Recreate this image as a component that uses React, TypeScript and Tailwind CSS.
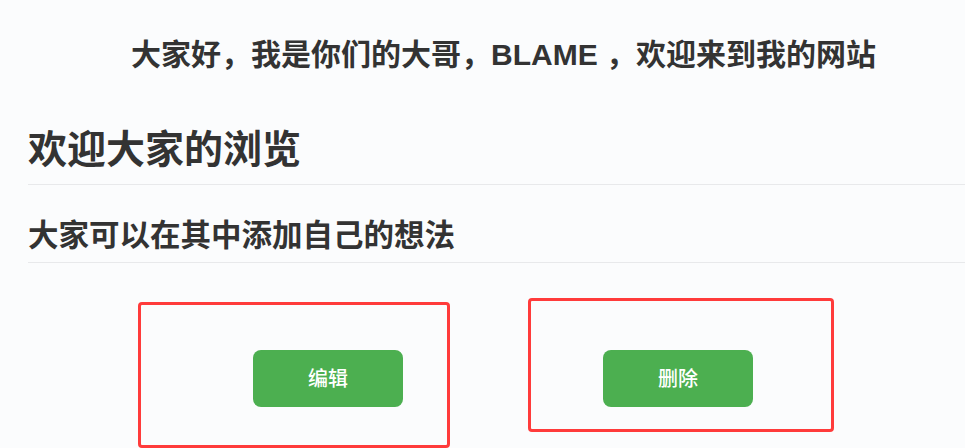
import React from "react";

export default function App() {
  const cjk = { fontFamily: '"Liberation Sans", "Noto Sans CJK SC", sans-serif' };
  return (
    <div className="w-[965px] h-[448px] overflow-hidden bg-[#fbfcfd] text-[#333333]" style={cjk}>
      <div className="pt-[40px]">
        <div className="flex justify-center pl-[42px]">
          <p className="text-[30px] leading-[29px] font-bold whitespace-nowrap">
            大家好，我是你们的大哥，BLAME ，欢迎来到我的网站
          </p>
        </div>
        <div className="ml-[28px] mt-[61px]">
          <h1 className="text-[39px] leading-[39px] font-bold pb-[15px] border-b border-[#e8e9eb]">
            欢迎大家的浏览
          </h1>
          <h2 className="mt-[35px] text-[30.5px] leading-[31px] font-bold pb-[11px] border-b border-[#e8e9eb]">
            大家可以在其中添加自己的想法
          </h2>
        </div>
        <div className="flex items-start">
          <div className="ml-[138px] mt-[39px] w-[312px] h-[146px] border-[3px] border-[#ff3b3b] rounded-[4px] pl-[112px] pt-[45px]">
            <button className="w-[150px] h-[57px] rounded-[8px] bg-[#4caf50] text-white text-[20px] font-medium">
              编辑
            </button>
          </div>
          <div className="ml-[78px] mt-[35px] w-[306px] h-[134px] border-[3px] border-[#ff3b3b] rounded-[4px] pl-[72px] pt-[49px]">
            <button className="w-[150px] h-[57px] rounded-[8px] bg-[#4caf50] text-white text-[20px] font-medium">
              删除
            </button>
          </div>
        </div>
      </div>
    </div>
  );
}
